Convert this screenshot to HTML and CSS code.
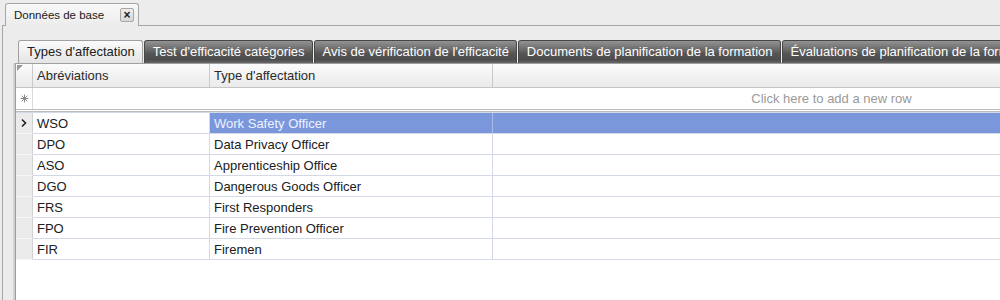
FILE: index.html
```html
<!DOCTYPE html>
<html lang="fr">
<head>
    <meta charset="UTF-8">
    <title>Données de base</title>
    <link rel="stylesheet" href="styles.css">
</head>
<body>
    <div class="doc-tabs">
        <div class="doc-tab">
            <span>Données de base</span>
            <span class="close-btn">&#215;</span>
        </div>
    </div>

    <div class="doc-panel">
        <div class="tab-strip">
            <div class="tab active">Types d'affectation</div>
            <div class="tab">Test d'efficacité catégories</div>
            <div class="tab">Avis de vérification de l'efficacité</div>
            <div class="tab">Documents de planification de la formation</div>
            <div class="tab">Évaluations de planification de la formation</div>
        </div>

        <div class="grid">
            <div class="row head">
                <div class="ind">
                    <svg class="corner" width="6" height="6" viewBox="0 0 6 6"><path d="M0 0H6L0 6Z" fill="#9a9a9a"/></svg>
                </div>
                <div class="cell c1">Abréviations</div>
                <div class="cell c2">Type d'affectation</div>
                <div class="cell c3"></div>
            </div>

            <div class="row new-row">
                <div class="ind">
                    <svg width="9" height="9" viewBox="0 0 9 9">
                        <g stroke="#8a8a8a" stroke-width="1">
                            <path d="M4.5 0.5V8.5M0.5 4.5H8.5M1.7 1.7L7.3 7.3M7.3 1.7L1.7 7.3"/>
                        </g>
                    </svg>
                </div>
                <div class="new-text">Click here to add a new row</div>
            </div>

            <div class="rows">
                <div class="row selected">
                    <div class="ind">
                        <svg width="8" height="10" viewBox="0 0 8 10"><path d="M2 1.5L5.5 5L2 8.5" fill="none" stroke="#222" stroke-width="1.6"/></svg>
                    </div>
                    <div class="cell c1">WSO</div>
                    <div class="cell c2">Work Safety Officer</div>
                    <div class="cell c3"></div>
                </div>
                <div class="row">
                    <div class="ind"></div>
                    <div class="cell c1">DPO</div>
                    <div class="cell c2">Data Privacy Officer</div>
                    <div class="cell c3"></div>
                </div>
                <div class="row">
                    <div class="ind"></div>
                    <div class="cell c1">ASO</div>
                    <div class="cell c2">Apprenticeship Office</div>
                    <div class="cell c3"></div>
                </div>
                <div class="row">
                    <div class="ind"></div>
                    <div class="cell c1">DGO</div>
                    <div class="cell c2">Dangerous Goods Officer</div>
                    <div class="cell c3"></div>
                </div>
                <div class="row">
                    <div class="ind"></div>
                    <div class="cell c1">FRS</div>
                    <div class="cell c2">First Responders</div>
                    <div class="cell c3"></div>
                </div>
                <div class="row">
                    <div class="ind"></div>
                    <div class="cell c1">FPO</div>
                    <div class="cell c2">Fire Prevention Officer</div>
                    <div class="cell c3"></div>
                </div>
                <div class="row">
                    <div class="ind"></div>
                    <div class="cell c1">FIR</div>
                    <div class="cell c2">Firemen</div>
                    <div class="cell c3"></div>
                </div>
            </div>
        </div>
    </div>
</body>
</html>
```

FILE: styles.css
```css
* {
    box-sizing: border-box;
}

body {
    margin: 0;
    height: 100vh;
    overflow: hidden;
    background: #ececec;
    color: #202020;
    font-family: 'Liberation Sans', Arial, sans-serif;
    font-size: 13px;
}

/* onglet du document */
.doc-tabs {
    display: flex;
    height: 26px;
    margin-left: 2px;
    padding: 3px 0 0 3px;
    border-bottom: 1px solid #a6a6a6;
}

.doc-tab {
    display: flex;
    align-items: center;
    width: 134px;
    height: 23px;
    margin-bottom: -1px;
    padding: 0 4px 1px 8px;
    border: 1px solid #a6a6a6;
    border-bottom: none;
    border-radius: 3px 3px 0 0;
    background: linear-gradient(#f8f8f8, #ececec);
    font-size: 11.5px;
    white-space: nowrap;
}

.close-btn {
    display: flex;
    align-items: center;
    justify-content: center;
    width: 14px;
    height: 14px;
    margin-left: auto;
    border: 1px solid #a8a8a8;
    border-radius: 2px;
    background: linear-gradient(#ececec, #d8d8d8);
    color: #222;
    font-size: 12px;
    font-weight: bold;
    line-height: 1;
}

.doc-panel {
    display: flex;
    flex-direction: column;
    height: calc(100vh - 26px);
    margin-left: 2px;
    padding: 14px 0 0 12px;
    border-left: 1px solid #a6a6a6;
    overflow: hidden;
}

/* onglets internes */
.tab-strip {
    display: flex;
    gap: 1px;
    padding-left: 3px;
    white-space: nowrap;
}

.tab {
    height: 23px;
    padding: 0 7px 0 8px;
    border: 1px solid #474747;
    border-bottom: none;
    border-radius: 3px 3px 0 0;
    background: linear-gradient(#939393 0%, #6e6e6e 35%, #535353 60%, #4d4d4d 85%, #666 100%);
    color: #fff;
    line-height: 21px;
    flex-shrink: 0;
}

.tab.active {
    border-color: #a0a0a0;
    background: linear-gradient(#fbfbfb, #e4e4e4);
    color: #202020;
}

/* grille */
.grid {
    flex: 1;
    width: 1615px;
    flex-shrink: 0;
    background: #fff;
    border-top: 1px solid #a0a0a0;
    border-left: 1px solid #9c9c9c;
    box-shadow: -2px 0 0 #d2d2d2;
}

.row {
    display: flex;
    height: 21px;
}

.ind {
    display: flex;
    align-items: center;
    justify-content: center;
    position: relative;
    width: 17px;
    flex-shrink: 0;
    background: #ebebeb;
    border-right: 1px solid #d2d2d2;
    border-bottom: 1px solid #f6f6f6;
}

.cell {
    padding: 1px 0 0 4px;
    line-height: 19px;
    white-space: nowrap;
    overflow: hidden;
    border-right: 1px solid #d3d9e6;
    border-bottom: 1px solid #d3d9e6;
}

.c1 {
    width: 177px;
}

.c2 {
    width: 283px;
}

.c3 {
    flex: 1;
}

.row.head {
    height: 24px;
    background: linear-gradient(#fbfbfb, #eaeaea);
    border-bottom: 1px solid #c4c4c4;
}

.row.head .ind,
.row.head .cell {
    background: none;
    border-bottom: none;
    border-right-color: #c9c9c9;
    padding-top: 0;
    line-height: 23px;
    color: #2a2a2a;
}

.corner {
    position: absolute;
    top: 1px;
    left: 1px;
}

.new-row {
    height: 24px;
    border-bottom: 3px double #bababa;
}

.new-row .ind {
    background: #fff;
    border-bottom: none;
    border-right-color: #dcdcdc;
}

.new-text {
    flex: 1;
    text-align: center;
    line-height: 22px;
    color: #9a9a9a;
}

.rows {
    border-top: 1px solid #d3d9e6;
}

.row.selected .c2,
.row.selected .c3 {
    background: #7b97dc;
    color: #eef2ff;
    border-right-color: #a9bbe9;
}
```
